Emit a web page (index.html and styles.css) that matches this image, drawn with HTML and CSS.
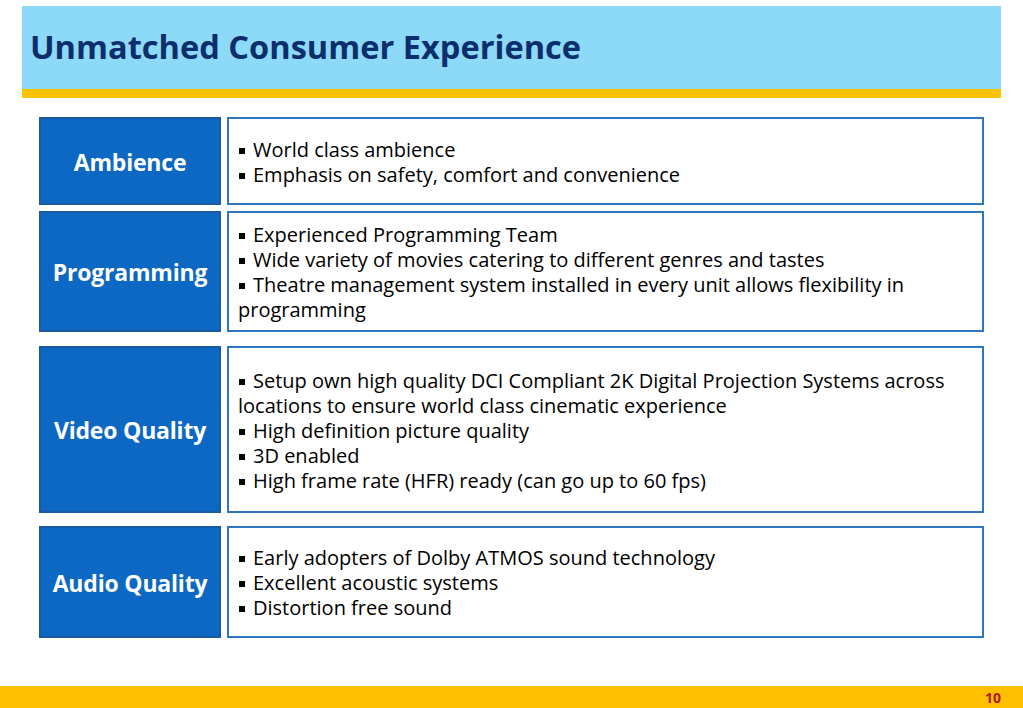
FILE: index.html
```html
<!DOCTYPE html>
<html>
<head>
<meta charset="utf-8">
<link rel="stylesheet" href="styles.css">
</head>
<body>
<div class="page">
  <header class="header">
    <h1 class="title">Unmatched Consumer Experience</h1>
  </header>
  <main class="rows">
    <section class="row row-1">
      <div class="label">Ambience</div>
      <div class="content">
        <p><span class="bullet"></span>World class ambience</p>
        <p><span class="bullet"></span>Emphasis on safety, comfort and convenience</p>
      </div>
    </section>
    <section class="row row-2">
      <div class="label">Programming</div>
      <div class="content">
        <p><span class="bullet"></span>Experienced Programming Team</p>
        <p><span class="bullet"></span>Wide variety of movies catering to different genres and tastes</p>
        <p><span class="bullet"></span>Theatre management system installed in every unit allows flexibility in programming</p>
      </div>
    </section>
    <section class="row row-3">
      <div class="label">Video Quality</div>
      <div class="content">
        <p><span class="bullet"></span>Setup own high quality DCI Compliant 2K Digital Projection Systems across locations to ensure world class cinematic experience</p>
        <p><span class="bullet"></span>High definition picture quality</p>
        <p><span class="bullet"></span>3D enabled</p>
        <p><span class="bullet"></span>High frame rate (HFR) ready (can go up to 60 fps)</p>
      </div>
    </section>
    <section class="row row-4">
      <div class="label">Audio Quality</div>
      <div class="content">
        <p><span class="bullet"></span>Early adopters of Dolby ATMOS sound technology</p>
        <p><span class="bullet"></span>Excellent acoustic systems</p>
        <p><span class="bullet"></span>Distortion free sound</p>
      </div>
    </section>
  </main>
  <footer class="footer">
    <span class="page-num">10</span>
  </footer>
</div>
</body>
</html>
```

FILE: styles.css
```css
* { box-sizing: border-box; }
html, body { margin: 0; padding: 0; background: #ffffff; }
body {
  font-family: "Open Sans", "Noto Sans", "DejaVu Sans", sans-serif;
  width: 1023px;
  height: 708px;
  overflow: hidden;
}
.page {
  position: relative;
  width: 1023px;
  height: 708px;
  display: flex;
  flex-direction: column;
}
.header {
  margin: 6px 22px 0 22px;
  height: 92px;
  background: #8cd9f8;
  border-bottom: 9px solid #fbc200;
  display: flex;
  align-items: center;
  padding-left: 8px;
  padding-bottom: 2px;
}
.title {
  margin: 0;
  font-size: 32.6px;
  font-weight: 700;
  color: #0c2e6c;
  letter-spacing: 0;
}
.rows {
  display: flex;
  flex-direction: column;
  padding-left: 39px;
  margin-top: 19px;
}
.row {
  display: flex;
  gap: 6px;
}
.row-1 { height: 88px; }
.row-2 { height: 121px; margin-top: 6px; }
.row-3 { height: 167px; margin-top: 14px; }
.row-4 { height: 112px; margin-top: 13px; }
.label {
  width: 182px;
  background: #0d68c3;
  border: 2px solid #1b5aa0;
  color: #ffffff;
  font-weight: 700;
  font-size: 23px;
  display: flex;
  align-items: center;
  justify-content: center;
  letter-spacing: -0.2px;
  padding-top: 1px;
}
.content {
  width: 757px;
  border: 2px solid #2f76c2;
  background: #ffffff;
  display: flex;
  flex-direction: column;
  justify-content: center;
  padding: 1px 20px 0 9px;
  color: #000000;
  font-size: 20px;
  line-height: 25px;
}
.content p { margin: 0; }
.bullet {
  display: inline-block;
  width: 6px;
  height: 6px;
  background: #000000;
  margin: 0 8px 0 1px;
  vertical-align: 3px;
}
.footer {
  margin-top: auto;
  height: 22px;
  background: #fec000;
  display: flex;
  align-items: center;
  justify-content: flex-end;
  padding-right: 22px;
}
.page-num {
  font-size: 14px;
  font-weight: 700;
  color: #b0171e;
}
```
